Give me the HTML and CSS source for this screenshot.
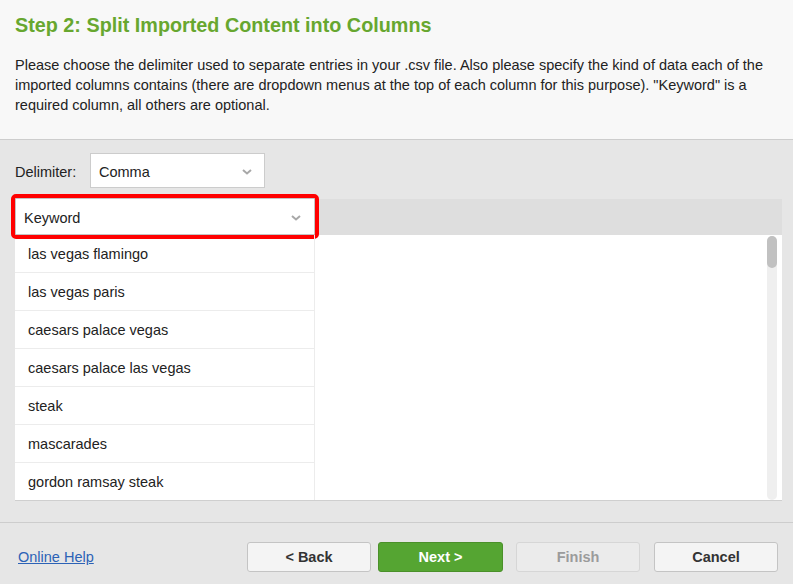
FILE: index.html
```html
<!DOCTYPE html>
<html>
<head>
<meta charset="utf-8">
<link rel="stylesheet" href="styles.css">
</head>
<body>
<div class="header">
  <h1 class="title">Step 2: Split Imported Content into Columns</h1>
  <p class="intro">Please choose the delimiter used to separate entries in your .csv file. Also please specify the kind of data each of the imported columns contains (there are dropdown menus at the top of each column for this purpose). "Keyword" is a required column, all others are optional.</p>
</div>
<div class="main">
  <div class="delim-row">
    <span class="delim-label">Delimiter:</span>
    <div class="select delim-select">
      <span>Comma</span>
      <svg class="chev" width="10" height="6" viewBox="0 0 10 6"><path d="M1 1 L5 4.5 L9 1" fill="none" stroke="#a8a8a8" stroke-width="2"/></svg>
    </div>
  </div>
  <div class="grid">
    <div class="grid-head">
      <div class="select col-select">
        <span>Keyword</span>
        <svg class="chev" width="10" height="6" viewBox="0 0 10 6"><path d="M1 1 L5 4.5 L9 1" fill="none" stroke="#a8a8a8" stroke-width="2"/></svg>
      </div>
    </div>
    <div class="grid-body">
      <div class="col">
        <div class="cell">las vegas flamingo</div>
        <div class="cell">las vegas paris</div>
        <div class="cell">caesars palace vegas</div>
        <div class="cell">caesars palace las vegas</div>
        <div class="cell">steak</div>
        <div class="cell">mascarades</div>
        <div class="cell">gordon ramsay steak</div>
      </div>
      <div class="rest"></div>
      <div class="scroll"><div class="thumb"></div></div>
    </div>
  </div>
</div>
<div class="footer">
  <a class="help" href="#">Online Help</a>
  <div class="buttons">
    <button class="btn back">&lt; Back</button>
    <button class="btn next">Next &gt;</button>
    <button class="btn finish" disabled>Finish</button>
    <button class="btn cancel">Cancel</button>
  </div>
</div>
</body>
</html>
```
FILE: styles.css
```css
* { box-sizing: border-box; }
html, body { margin: 0; padding: 0; }
body {
  width: 793px;
  height: 584px;
  overflow: hidden;
  background: #e6e6e6;
  font-family: "Liberation Sans", Arial, sans-serif;
  font-size: 14.5px;
  color: #222;
}
.header {
  height: 140px;
  background: #f8f8f8;
  border-bottom: 1px solid #cdcdcd;
  padding: 13px 15px 0 15px;
}
.title {
  margin: 0;
  font-size: 19.8px;
  line-height: 24px;
  font-weight: bold;
  color: #67a72f;
}
.intro {
  margin: 18px 0 0 0;
  line-height: 20px;
  color: #222;
}
.main {
  padding: 13px 11px 0 15px;
  height: 383px;
  border-bottom: 1px solid #cdcdcd;
}
.delim-row {
  display: flex;
  align-items: center;
  height: 35px;
}
.delim-label {
  width: 75px;
  color: #222;
  padding-top: 2px;
}
.select {
  display: flex;
  align-items: center;
  justify-content: space-between;
  background: #fff;
  border: 1px solid #cccccc;
  padding: 2px 12px 0 8px;
  color: #222;
}
.delim-select {
  width: 175px;
  height: 35px;
}
.chev { display: block; }
.grid {
  margin-top: 11px;
  border-bottom: 1px solid #cfcfcf;
}
.grid-head {
  height: 36px;
  background: #dedede;
  display: flex;
}
.col-select {
  width: 300px;
  height: 37px;
  margin-top: -1px;
  outline: 4px solid #ff0000;
  border-radius: 1px;
  border-color: #c4c4c4;
  padding-right: 13px;
}
.grid-body {
  height: 265px;
  overflow: hidden;
  display: flex;
  background: #fff;
}
.col {
  width: 300px;
  border-right: 1px solid #ececec;
}
.cell {
  height: 38px;
  line-height: 38px;
  border-bottom: 1px solid #ececec;
  padding-left: 13px;
  color: #222;
}
.rest { flex: 1; }
.scroll {
  width: 10px;
  margin: 1px 5px 0 0;
  background: #efefef;
  border-radius: 5px;
}
.thumb {
  height: 32px;
  background: #c1c1c1;
  border-radius: 5px;
}
.footer {
  display: flex;
  align-items: flex-start;
  justify-content: space-between;
  padding: 19px 15px 0 18px;
}
.help {
  margin-top: 7px;
  color: #2c62b6;
  text-decoration: underline;
}
.buttons {
  display: flex;
}
.btn {
  width: 124px;
  height: 30px;
  border-radius: 3px;
  font-family: "Liberation Sans", Arial, sans-serif;
  font-size: 14.5px;
  font-weight: bold;
  padding: 0;
  border: 1px solid #c4c4c4;
  background: #f4f4f4;
  color: #333;
}
.back { margin-right: 7px; }
.next {
  width: 125px;
  background: #55a532;
  border-color: #4a9029;
  color: #fff;
  margin-right: 13px;
}
.finish {
  background: #ebebeb;
  border-color: #d6d6d6;
  color: #9b9b9b;
  margin-right: 14px;
}
```
